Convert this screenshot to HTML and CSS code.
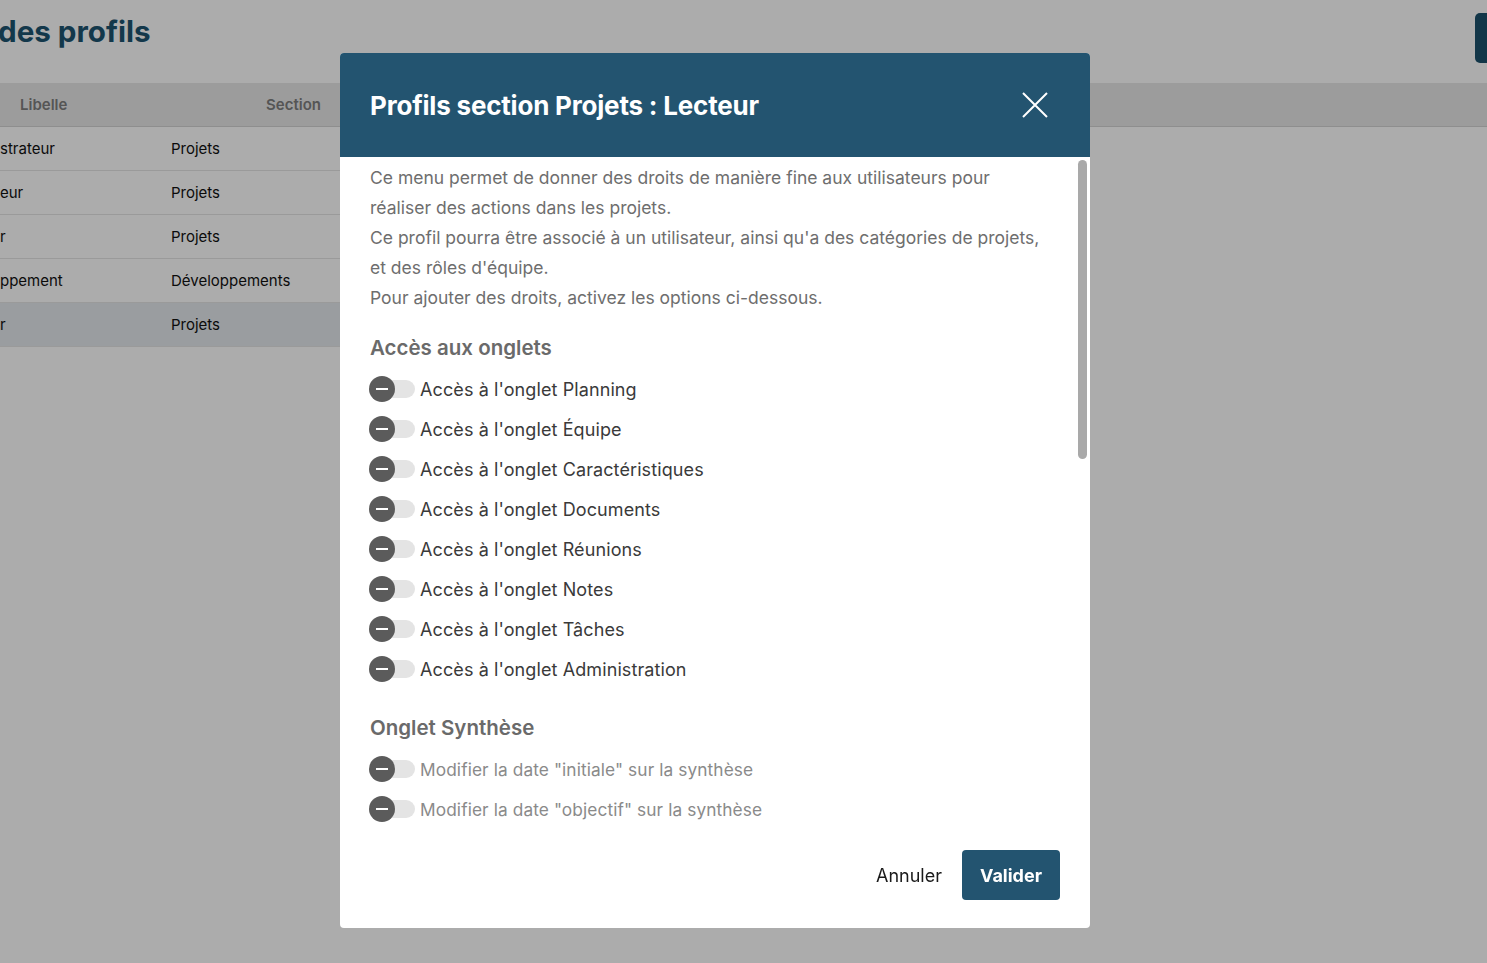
FILE: index.html
```html
<!DOCTYPE html>
<html lang="fr">
<head>
<meta charset="utf-8">
<title>Gestion des profils</title>
<link rel="stylesheet" href="styles.css">
</head>
<body>
<div class="page">
  <div class="topbar">
    <h1 class="page-title">des profils</h1>
    <div class="top-action"></div>
  </div>
  <table class="grid">
    <thead>
      <tr><th class="c1">Libelle</th><th class="c2">Section</th><th class="c3"></th></tr>
    </thead>
    <tbody>
      <tr><td class="c1">strateur</td><td class="c2">Projets</td><td class="c3"></td></tr>
      <tr><td class="c1">eur</td><td class="c2">Projets</td><td class="c3"></td></tr>
      <tr><td class="c1">r</td><td class="c2">Projets</td><td class="c3"></td></tr>
      <tr><td class="c1">ppement</td><td class="c2">Développements</td><td class="c3"></td></tr>
      <tr class="selected"><td class="c1">r</td><td class="c2">Projets</td><td class="c3"></td></tr>
    </tbody>
  </table>
</div>

<div class="overlay"></div>

<div class="modal" role="dialog">
  <div class="modal-header">
    <h2 class="modal-title">Profils section Projets : Lecteur</h2>
    <button class="close-btn" aria-label="Fermer">
      <svg width="26" height="26" viewBox="0 0 26 26"><path d="M1 1 L25 25 M25 1 L1 25" stroke="#fff" stroke-width="2" fill="none"/></svg>
    </button>
  </div>
  <div class="modal-body">
    <p class="intro">Ce menu permet de donner des droits de manière fine aux utilisateurs pour réaliser des actions dans les projets.<br>Ce profil pourra être associé à un utilisateur, ainsi qu'a des catégories de projets, et des rôles d'équipe.<br>Pour ajouter des droits, activez les options ci-dessous.</p>

    <h3 class="section-title">Accès aux onglets</h3>
    <div class="opt"><span class="toggle"><span class="knob"></span></span><span class="lbl">Accès à l'onglet Planning</span></div>
    <div class="opt"><span class="toggle"><span class="knob"></span></span><span class="lbl">Accès à l'onglet Équipe</span></div>
    <div class="opt"><span class="toggle"><span class="knob"></span></span><span class="lbl">Accès à l'onglet Caractéristiques</span></div>
    <div class="opt"><span class="toggle"><span class="knob"></span></span><span class="lbl">Accès à l'onglet Documents</span></div>
    <div class="opt"><span class="toggle"><span class="knob"></span></span><span class="lbl">Accès à l'onglet Réunions</span></div>
    <div class="opt"><span class="toggle"><span class="knob"></span></span><span class="lbl">Accès à l'onglet Notes</span></div>
    <div class="opt"><span class="toggle"><span class="knob"></span></span><span class="lbl">Accès à l'onglet Tâches</span></div>
    <div class="opt"><span class="toggle"><span class="knob"></span></span><span class="lbl">Accès à l'onglet Administration</span></div>

    <h3 class="section-title">Onglet Synthèse</h3>
    <div class="opt disabled"><span class="toggle"><span class="knob"></span></span><span class="lbl">Modifier la date "initiale" sur la synthèse</span></div>
    <div class="opt disabled"><span class="toggle"><span class="knob"></span></span><span class="lbl">Modifier la date "objectif" sur la synthèse</span></div>
  </div>
  <div class="scroll-thumb"></div>
  <div class="modal-footer">
    <button class="btn-cancel">Annuler</button>
    <button class="btn-ok">Valider</button>
  </div>
</div>
</body>
</html>
```

FILE: styles.css
```css
* { box-sizing: border-box; }
html, body { margin: 0; padding: 0; height: 100%; overflow: hidden; }
body {
  font-family: Inter, "Noto Sans", "Liberation Sans", sans-serif;
  background: #ffffff;
  color: #222;
}

.page { width: 100%; }

.topbar {
  display: flex;
  justify-content: space-between;
  align-items: flex-start;
  height: 83px;
}
.page-title {
  margin: 13px 0 0 -2px;
  font-size: 29.6px;
  font-weight: 700;
  color: #1d5470;
}
.top-action {
  width: 12px;
  height: 50px;
  margin-top: 13px;
  background: #1c506c;
  border-radius: 5px 0 0 5px;
}

.grid {
  width: 100%;
  border-collapse: collapse;
  font-size: 15px;
}
.grid thead tr {
  background: #e8e8e8;
  border-bottom: 1px solid #d3d3d3;
}
.grid th {
  height: 43px;
  font-weight: 600;
  color: #7e7e7e;
  text-align: left;
  padding: 0;
}
.grid th.c1 { width: 171px; padding-left: 20px; }
.grid th.c2 { width: 169px; text-align: right; padding-right: 19px; }
.grid td {
  height: 44px;
  padding: 0;
  color: #111;
  border-bottom: 1px solid #e4e4e4;
}
.grid td.c3 { border-bottom: 0; }
.grid tr.selected td.c1,
.grid tr.selected td.c2 { background: #e4e9ed; }

.overlay {
  position: fixed;
  inset: 0;
  background: rgba(0, 0, 0, 0.325);
}

.modal {
  position: fixed;
  left: 340px;
  top: 53px;
  width: 750px;
  height: 875px;
  background: #fff;
  border-radius: 4px;
  display: flex;
  flex-direction: column;
  overflow: hidden;
}
.modal-header {
  background: #235470;
  height: 104px;
  flex: none;
  display: flex;
  align-items: center;
  justify-content: space-between;
  padding: 0 42px 0 30px;
}
.modal-title {
  margin: 0;
  color: #fff;
  font-size: 26px;
  font-weight: 700;
  letter-spacing: -0.2px;
}
.close-btn {
  background: none;
  border: 0;
  padding: 0;
  width: 26px;
  height: 26px;
  display: flex;
  cursor: pointer;
}

.modal-body {
  flex: 1;
  overflow: hidden;
  padding: 6px 44px 10px 30px;
}
.scroll-thumb {
  position: absolute;
  left: 738px;
  top: 107px;
  width: 9px;
  height: 299px;
  border-radius: 5px;
  background: #a9a9a9;
}

.intro {
  margin: 0;
  font-size: 17.5px;
  line-height: 30px;
  color: #6e6e6e;
}
.section-title {
  margin: 20px 0 6px;
  font-size: 20.5px;
  line-height: 30px;
  font-weight: 600;
  color: #6a6a6a;
}
.opt + .section-title { margin-top: 24px; }

.opt {
  display: flex;
  align-items: center;
  height: 40px;
}
.toggle {
  position: relative;
  width: 45px;
  height: 18px;
  border-radius: 9px;
  background: #e4e4e4;
  flex: none;
  margin-right: 5px;
}
.knob {
  position: absolute;
  left: -1px;
  top: -4px;
  width: 26px;
  height: 26px;
  border-radius: 50%;
  background: #5b5b5b;
}
.knob::after {
  content: "";
  position: absolute;
  left: 7px;
  top: 12px;
  width: 12px;
  height: 2px;
  background: #fff;
}
.lbl {
  font-size: 18px;
  color: #3a3a3a;
  letter-spacing: 0.1px;
}
.opt.disabled .lbl { color: #8a8a8a; font-size: 17.3px; }

.modal-footer {
  flex: none;
  display: flex;
  justify-content: flex-end;
  align-items: center;
  gap: 20px;
  padding: 15px 30px 28px;
}
.btn-cancel {
  background: none;
  border: 0;
  font-family: inherit;
  font-size: 18px;
  color: #1a1a1a;
  padding: 0;
}
.btn-ok {
  height: 50px;
  width: 98px;
  border: 0;
  border-radius: 4px;
  background: #235470;
  color: #fff;
  font-family: inherit;
  font-size: 18px;
  font-weight: 700;
}
```
